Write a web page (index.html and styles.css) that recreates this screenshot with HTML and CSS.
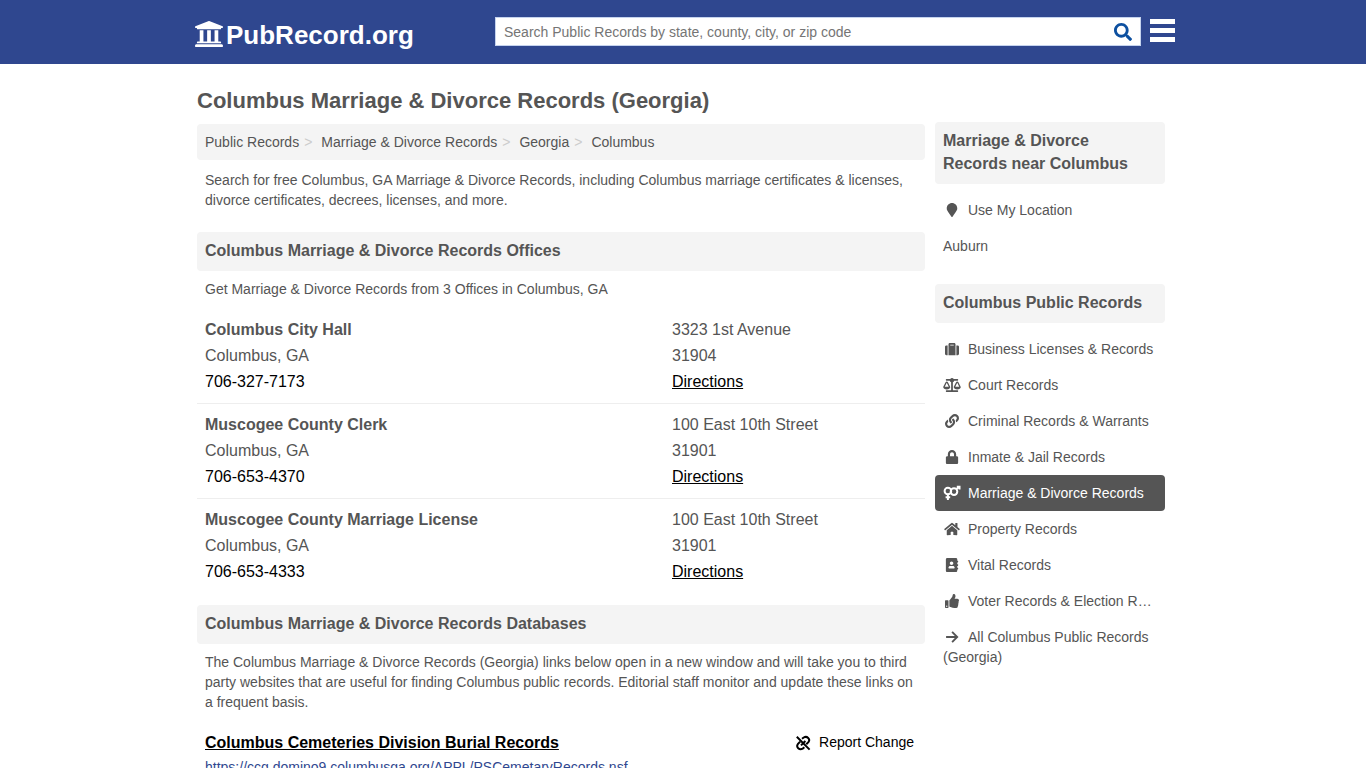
FILE: index.html
```html
<!DOCTYPE html>
<html lang="en">
<head>
<meta charset="utf-8">
<meta name="viewport" content="width=device-width, initial-scale=1">
<title>Columbus Marriage &amp; Divorce Records (Georgia)</title>
<link rel="stylesheet" href="styles.css">
</head>
<body>
<header class="site-header">
  <div class="header-inner">
    <a class="logo" href="#">
      <svg class="logo-icon" viewBox="16 32 480 448" aria-hidden="true"><path d="M496 128v16a8 8 0 0 1-8 8h-24v12c0 6.627-5.373 12-12 12H60c-6.627 0-12-5.373-12-12v-12H24a8 8 0 0 1-8-8v-16a8 8 0 0 1 4.941-7.392l232-88a7.996 7.996 0 0 1 6.118 0l232 88A8 8 0 0 1 496 128zm-24 304H40c-13.255 0-24 10.745-24 24v16a8 8 0 0 0 8 8h464a8 8 0 0 0 8-8v-16c0-13.255-10.745-24-24-24zM96 192v192H60c-6.627 0-12 5.373-12 12v20h416v-20c0-6.627-5.373-12-12-12h-36V192h-64v192h-64V192h-64v192h-64V192H96z"/></svg>
      <span>PubRecord.org</span>
    </a>
    <form class="search">
      <input class="search-input" type="text" aria-label="Search Public Records" placeholder="Search Public Records by state, county, city, or zip code">
      <button class="search-button" type="button" aria-label="Search">
        <svg viewBox="0 0 512 512" aria-hidden="true"><path d="M505 442.7L405.3 343c-4.5-4.5-10.6-7-17-7H372c27.6-35.3 44-79.7 44-128C416 93.1 322.9 0 208 0S0 93.1 0 208s93.1 208 208 208c48.3 0 92.7-16.4 128-44v16.3c0 6.4 2.5 12.5 7 17l99.7 99.7c9.4 9.4 24.6 9.4 33.9 0l28.3-28.3c9.4-9.4 9.4-24.6.1-34zM208 336c-70.7 0-128-57.2-128-128 0-70.7 57.2-128 128-128 70.7 0 128 57.2 128 128 0 70.7-57.2 128-128 128z"/></svg>
      </button>
    </form>
    <button class="menu-button" type="button" aria-label="Menu"><span></span><span></span><span></span></button>
  </div>
</header>

<div class="page">
  <main class="main">
    <h1>Columbus Marriage &amp; Divorce Records (Georgia)</h1>
    <nav aria-label="Breadcrumb">
      <ol class="breadcrumb">
        <li><a href="#">Public Records</a></li>
        <li><a href="#">Marriage &amp; Divorce Records</a></li>
        <li><a href="#">Georgia</a></li>
        <li><a href="#">Columbus</a></li>
      </ol>
    </nav>
    <p class="text intro">Search for free Columbus, GA Marriage &amp; Divorce Records, including Columbus marriage certificates &amp; licenses, divorce certificates, decrees, licenses, and more.</p>

    <section class="section">
      <h2 class="panel-title">Columbus Marriage &amp; Divorce Records Offices</h2>
      <p class="text">Get Marriage &amp; Divorce Records from 3 Offices in Columbus, GA</p>
      <ul class="offices">
        <li class="office">
          <div><strong>Columbus City Hall</strong><br>Columbus, GA<br><a class="phone" href="tel:7063277173">706-327-7173</a></div>
          <div>3323 1st Avenue<br>31904<br><a class="directions" href="#">Directions</a></div>
        </li>
        <li class="office">
          <div><strong>Muscogee County Clerk</strong><br>Columbus, GA<br><a class="phone" href="tel:7066534370">706-653-4370</a></div>
          <div>100 East 10th Street<br>31901<br><a class="directions" href="#">Directions</a></div>
        </li>
        <li class="office">
          <div><strong>Muscogee County Marriage License</strong><br>Columbus, GA<br><a class="phone" href="tel:7066534333">706-653-4333</a></div>
          <div>100 East 10th Street<br>31901<br><a class="directions" href="#">Directions</a></div>
        </li>
      </ul>
    </section>

    <section class="section">
      <h2 class="panel-title">Columbus Marriage &amp; Divorce Records Databases</h2>
      <p class="text">The Columbus Marriage &amp; Divorce Records (Georgia) links below open in a new window and will take you to third party websites that are useful for finding Columbus public records. Editorial staff monitor and update these links on a frequent basis.</p>
      <article class="database">
        <div class="database-head">
          <a class="database-title" href="#">Columbus Cemeteries Division Burial Records</a>
          <a class="report" href="#">
            <svg viewBox="0 0 16 16" aria-hidden="true"><path d="M1.800 1.800l12.800 12.800M7 3.800l1.700-1.300C12 .6 15.800 4 13.400 7.200L11.300 9.300M9.400 12.300l-1.700 1.300C4.400 15.500.6 12.100 3 8.900L5.100 6.800M6 10.400l4.400-4.400"/></svg>
            Report Change
          </a>
        </div>
        <a class="database-url" href="#">https://ccg.domino9.columbusga.org/APPL/PSCemetaryRecords.nsf</a>
      </article>
    </section>
  </main>

  <aside class="sidebar">
    <h2 class="panel-title">Marriage &amp; Divorce Records near Columbus</h2>
    <ul class="links">
      <li><a href="#"><svg class="icon" viewBox="0 0 384 512" aria-hidden="true"><path d="M172.268 501.670C26.970 291.031 0 269.413 0 192 0 85.961 85.961 0 192 0s192 85.961 192 192c0 77.413-26.970 99.031-172.268 309.670-9.535 13.774-29.930 13.773-39.464 0z"/></svg>Use My Location</a></li>
      <li><a href="#">Auburn</a></li>
    </ul>
    <h2 class="panel-title">Columbus Public Records</h2>
    <ul class="links">
      <li><a href="#"><svg class="icon" viewBox="0 0 512 512" aria-hidden="true"><path d="M128 480h256V80c0-26.500-21.500-48-48-48H176c-26.500 0-48 21.500-48 48v400zm64-384h128v32H192V96zm320 80v256c0 26.500-21.500 48-48 48h-48V128h48c26.500 0 48 21.500 48 48zM96 480H48c-26.500 0-48-21.500-48-48V176c0-26.500 21.500-48 48-48h48v352z"/></svg>Business Licenses &amp; Records</a></li>
      <li><a href="#"><svg class="icon" viewBox="0 0 640 512" aria-hidden="true"><path d="M256 336h-.02c0-16.180 1.340-8.730-85.050-181.510-17.650-35.290-68.190-35.360-85.870 0C-2.060 328.750.02 320.330.02 336H0c0 44.180 57.310 80 128 80s128-35.820 128-80zM128 176l72 144H56l72-144zm511.980 160c0-16.180 1.340-8.730-85.050-181.510-17.650-35.290-68.190-35.360-85.870 0-87.120 174.260-85.040 165.840-85.040 181.510H384c0 44.180 57.310 80 128 80s128-35.820 128-80h-.02zM440 320l72-144 72 144H440zm88 128H352V153.250c23.510-10.290 41.160-31.480 46.390-57.250H528c8.840 0 16-7.160 16-16V48c0-8.840-7.160-16-16-16H383.640C369.040 12.680 346.090 0 320 0s-49.040 12.680-63.640 32H112c-8.840 0-16 7.160-16 16v32c0 8.840 7.160 16 16 16h129.610c5.230 25.760 22.870 46.960 46.390 57.250V448H112c-8.840 0-16 7.160-16 16v32c0 8.840 7.160 16 16 16h416c8.840 0 16-7.160 16-16v-32c0-8.840-7.160-16-16-16z"/></svg>Court Records</a></li>
      <li><a href="#"><svg class="icon" viewBox="0 0 512 512" aria-hidden="true"><path d="M326.612 185.391c59.747 59.809 58.927 155.698.36 214.590-.11.12-.24.25-.36.37l-67.200 67.200c-59.270 59.270-155.699 59.262-214.960 0-59.270-59.260-59.270-155.700 0-214.960l37.106-37.106c9.840-9.840 26.786-3.300 27.294 10.606.648 17.722 3.826 35.527 9.690 52.721 1.986 5.822.567 12.262-3.783 16.612l-13.087 13.087c-28.026 28.026-28.905 73.660-1.155 101.960 28.024 28.579 74.086 28.749 102.325.51l67.200-67.190c28.191-28.191 28.073-73.757 0-101.830-3.701-3.694-7.429-6.564-10.341-8.569a16.037 16.037 0 0 1-6.947-12.606c-.396-10.567 3.348-21.456 11.698-29.806l21.054-21.055c5.521-5.521 14.182-6.199 20.584-1.731a152.482 152.482 0 0 1 20.522 17.197zM467.547 44.449c-59.261-59.262-155.690-59.270-214.960 0l-67.200 67.200c-.12.12-.25.25-.36.37-58.566 58.892-59.387 154.781.36 214.590a152.454 152.454 0 0 0 20.521 17.196c6.402 4.468 15.064 3.789 20.584-1.731l21.054-21.055c8.350-8.350 12.094-19.239 11.698-29.806a16.037 16.037 0 0 0-6.947-12.606c-2.912-2.005-6.640-4.875-10.341-8.569-28.073-28.073-28.191-73.639 0-101.830l67.200-67.190c28.239-28.239 74.300-28.069 102.325.51 27.750 28.300 26.872 73.934-1.155 101.960l-13.087 13.087c-4.350 4.350-5.769 10.790-3.783 16.612 5.864 17.194 9.042 34.999 9.690 52.721.509 13.906 17.454 20.446 27.294 10.606l37.106-37.106c59.271-59.259 59.271-155.699.001-214.959z"/></svg>Criminal Records &amp; Warrants</a></li>
      <li><a href="#"><svg class="icon" viewBox="0 0 448 512" aria-hidden="true"><path d="M400 224h-24v-72C376 68.200 307.800 0 224 0S72 68.200 72 152v72H48c-26.500 0-48 21.500-48 48v192c0 26.500 21.500 48 48 48h352c26.500 0 48-21.500 48-48V272c0-26.500-21.500-48-48-48zm-104 0H152v-72c0-39.700 32.300-72 72-72s72 32.300 72 72v72z"/></svg>Inmate &amp; Jail Records</a></li>
      <li><a class="active" href="#" aria-current="page"><svg class="icon icon-rings" viewBox="0 0 18 14" aria-hidden="true"><circle cx="4.900" cy="5" r="3.300"/><circle cx="11" cy="5.600" r="3.300"/><path d="M4.900 8.300v5.700M2.600 11.200h4.600M13.300 3.200L16.200.6M13.800.8h2.700v2.700"/></svg>Marriage &amp; Divorce Records</a></li>
      <li><a href="#"><svg class="icon" viewBox="0 0 576 512" aria-hidden="true"><path d="M280.370 148.260L96 300.110V464a16 16 0 0 0 16 16l112.060-.29a16 16 0 0 0 15.920-16V368a16 16 0 0 1 16-16h64a16 16 0 0 1 16 16v95.640a16 16 0 0 0 16 16.050L464 480a16 16 0 0 0 16-16V300L295.670 148.260a12.190 12.190 0 0 0-15.300 0zM571.600 251.470L488 182.560V44.050a12 12 0 0 0-12-12h-56a12 12 0 0 0-12 12v72.610L318.470 43a48 48 0 0 0-61 0L4.340 251.470a12 12 0 0 0-1.600 16.900l25.500 31A12 12 0 0 0 45.150 301l235.220-193.740a12.190 12.190 0 0 1 15.300 0L530.900 301a12 12 0 0 0 16.900-1.600l25.500-31a12 12 0 0 0-1.700-16.930z"/></svg>Property Records</a></li>
      <li><a href="#"><svg class="icon" viewBox="0 0 448 512" aria-hidden="true"><path d="M436 160c6.600 0 12-5.400 12-12v-40c0-6.600-5.400-12-12-12h-20V48c0-26.500-21.500-48-48-48H48C21.500 0 0 21.500 0 48v416c0 26.500 21.500 48 48 48h320c26.500 0 48-21.500 48-48v-48h20c6.600 0 12-5.400 12-12v-40c0-6.600-5.400-12-12-12h-20v-64h20c6.600 0 12-5.400 12-12v-40c0-6.600-5.400-12-12-12h-20v-64h20zm-228-32c35.300 0 64 28.700 64 64s-28.700 64-64 64-64-28.700-64-64 28.700-64 64-64zm112 236.800c0 10.600-10 19.200-22.400 19.200H118.400C106 384 96 375.400 96 364.800v-19.200c0-31.800 30.100-57.600 67.200-57.600h5c12.300 5.100 25.700 8 39.800 8s27.600-2.900 39.800-8h5c37.100 0 67.200 25.800 67.200 57.600v19.200z"/></svg>Vital Records</a></li>
      <li><a href="#"><svg class="icon" viewBox="0 0 512 512" aria-hidden="true"><path d="M104 224H24c-13.255 0-24 10.745-24 24v240c0 13.255 10.745 24 24 24h80c13.255 0 24-10.745 24-24V248c0-13.255-10.745-24-24-24zM64 472c-13.255 0-24-10.745-24-24s10.745-24 24-24 24 10.745 24 24-10.745 24-24 24zM384 81.452c0 42.416-25.970 66.208-33.277 94.548h101.723c33.397 0 59.397 27.746 59.553 58.098.084 17.938-7.546 37.249-19.439 49.197l-.11.11c9.836 23.337 8.237 56.037-9.308 79.469 8.681 25.895-.069 57.704-16.382 74.757 4.298 17.598 2.244 32.575-6.148 44.632C440.202 511.587 389.616 512 346.839 512l-2.845-.001c-48.287-.017-87.806-17.598-119.560-31.725-15.957-7.099-36.821-15.887-52.651-16.178-6.540-.12-11.783-5.457-11.783-11.998v-213.770c0-3.200 1.282-6.271 3.558-8.521 39.614-39.144 56.648-80.587 89.117-113.111 14.804-14.832 20.188-37.236 25.393-58.902C282.515 39.293 291.817 0 312 0c24 0 72 8 72 81.452z"/></svg>Voter Records &amp; Election Records</a></li>
      <li><a class="wrap" href="#"><svg class="icon icon-line" viewBox="0 0 512 512" aria-hidden="true"><path d="M40 256h410M260 70l186 186-186 186"/></svg>All Columbus Public Records (Georgia)</a></li>
    </ul>
  </aside>
</div>
</body>
</html>
```
FILE: styles.css
```css
* {
  box-sizing: border-box;
}

body {
  margin: 0;
  background: #fff;
  color: #555;
  font: 14px/20px "Liberation Sans", Arial, sans-serif;
}

h1, h2, p, ul, ol {
  margin: 0;
  padding: 0;
}

ul, ol {
  list-style: none;
}

a {
  color: inherit;
  text-decoration: none;
}

button {
  padding: 0;
  border: 0;
  background: none;
  cursor: pointer;
}

.site-header {
  background: #2f478f;
}

.header-inner {
  display: flex;
  align-items: flex-start;
  max-width: 976px;
  height: 64px;
  margin: 0 auto;
  padding-top: 17px;
}

.logo {
  display: flex;
  flex: 1;
  align-items: center;
  gap: 3px;
  height: 36px;
  color: #fff;
  font-size: 26px;
  font-weight: bold;
}

.logo-icon {
  width: 28px;
  height: 26px;
  margin-bottom: 2px;
  fill: currentColor;
}

.search {
  display: flex;
  flex: 0 1 646px;
  min-width: 0;
  height: 29px;
  border: 1px solid #c5d3ee;
  background: #fff;
}

.search-input {
  flex: 1;
  min-width: 0;
  padding: 0 8px;
  border: 0;
  background: none;
  color: #555;
  font: inherit;
}

.search-input::placeholder {
  color: #757575;
}

.search-button {
  width: 34px;
}

.search-button svg {
  display: block;
  width: 18px;
  height: 18px;
  margin: 0 auto;
  fill: #0d50a0;
}

.menu-button {
  display: flex;
  flex: none;
  flex-direction: column;
  gap: 4px;
  width: 25px;
  margin: 2px -4px 0 9px;
}

.menu-button span {
  width: 100%;
  height: 5px;
  background: #fff;
}

.page {
  display: grid;
  grid-template-columns: minmax(0, 1fr) 230px;
  gap: 10px;
  max-width: 972px;
  margin: 0 auto;
  padding-right: 4px;
}

.main {
  padding-top: 24px;
}

h1 {
  margin-bottom: 10px;
  font-size: 22px;
  line-height: 26px;
}

.breadcrumb {
  display: flex;
  flex-wrap: wrap;
  padding: 8px;
  border-radius: 4px;
  background: #f4f4f4;
}

.breadcrumb li + li::before {
  content: ">";
  padding: 0 9px 0 5px;
  color: #ccc;
}

.text {
  padding: 0 8px;
}

.intro {
  margin-top: 10px;
}

.section {
  margin-top: 22px;
}

.section + .section {
  margin-top: 12px;
}

.panel-title {
  margin-bottom: 8px;
  padding: 7px 8px 9px;
  border-radius: 4px;
  background: #f4f4f4;
  font-size: 16px;
  line-height: 23px;
}

.offices {
  margin-top: 10px;
}

.office {
  display: grid;
  grid-template-columns: minmax(0, 1fr) 245px;
  padding: 8px;
  font-size: 16px;
  line-height: 26px;
}

.office + .office {
  border-top: 1px solid #eee;
}

.phone {
  color: #000;
}

.directions {
  color: #000;
  text-decoration: underline;
}

.database {
  padding: 18px 8px;
}

.database-head {
  display: flex;
  align-items: center;
  justify-content: space-between;
  padding-right: 3px;
  color: #000;
  line-height: 25px;
}

.database-title {
  font-size: 16px;
  font-weight: bold;
  text-decoration: underline;
}

.report {
  display: flex;
  align-items: center;
  gap: 8px;
}

.report svg {
  width: 16px;
  height: 16px;
  fill: none;
  stroke: currentColor;
  stroke-width: 2;
}

.database-url {
  color: #2f478f;
  line-height: 24px;
}

.sidebar {
  padding-top: 58px;
}

.links {
  margin-bottom: 20px;
}

.links a {
  display: block;
  overflow: hidden;
  padding: 8px;
  border-radius: 4px;
  text-overflow: ellipsis;
  white-space: nowrap;
}

.links .wrap {
  white-space: normal;
}

.links .active {
  background: #555;
  color: #fff;
}

.icon {
  width: 18px;
  height: 14px;
  margin-right: 7px;
  vertical-align: -2px;
  fill: currentColor;
}

.icon-line {
  fill: none;
  stroke: currentColor;
  stroke-width: 68;
}

.icon-rings {
  overflow: visible;
  fill: none;
  stroke: currentColor;
  stroke-width: 2;
}
```
